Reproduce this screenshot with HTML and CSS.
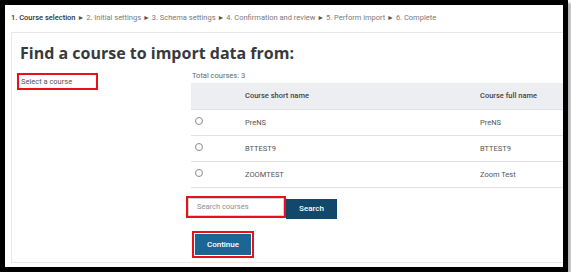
FILE: index.html
```html
<!DOCTYPE html>
<html lang="en">
<head>
    <meta charset="UTF-8">
    <title>Import course data</title>
    <link rel="stylesheet" href="styles.css">
</head>
<body>
    <div class="frame">
        <div class="steps">
            <span class="step-current">1. Course selection</span>
            <span class="sep">&#9658;</span> 2. Initial settings
            <span class="sep">&#9658;</span> 3. Schema settings
            <span class="sep">&#9658;</span> 4. Confirmation and review
            <span class="sep">&#9658;</span> 5. Perform import
            <span class="sep">&#9658;</span> 6. Complete
        </div>

        <div class="card">
            <h2>Find a course to import data from:</h2>

            <div class="layout">
                <div class="left">
                    <span class="label marked">Select a course</span>
                </div>
                <div class="right">
                    <div class="total">Total courses: 3</div>
                    <table class="courses">
                        <thead>
                            <tr>
                                <th class="col-pick"></th>
                                <th class="col-short">Course short name</th>
                                <th>Course full name</th>
                            </tr>
                        </thead>
                        <tbody>
                            <tr>
                                <td class="col-pick"><span class="radio"></span></td>
                                <td>PreNS</td>
                                <td>PreNS</td>
                            </tr>
                            <tr>
                                <td class="col-pick"><span class="radio"></span></td>
                                <td>BTTEST9</td>
                                <td>BTTEST9</td>
                            </tr>
                            <tr>
                                <td class="col-pick"><span class="radio"></span></td>
                                <td>ZOOMTEST</td>
                                <td>Zoom Test</td>
                            </tr>
                        </tbody>
                    </table>

                    <div class="search">
                        <div class="marked search-box">
                            <input type="text" placeholder="Search courses">
                        </div>
                        <button class="btn btn-dark">Search</button>
                    </div>

                    <div class="marked continue-box">
                        <button class="btn btn-primary">Continue</button>
                    </div>
                </div>
            </div>
        </div>
    </div>
</body>
</html>
```

FILE: styles.css
```css
body {
    margin: 0;
    background: #fff;
    font-family: Roboto, "Liberation Sans", sans-serif;
    color: #555;
}
.frame {
    width: 558px;
    height: 262px;
    border: 5px solid #000;
    box-shadow: 3px 3px 2px #b5b5b5;
    overflow: hidden;
    background: #fff;
}
.steps {
    margin: 8px 0 0 6px;
    font-size: 7.5px;
    line-height: 10px;
    color: #7a7a7a;
    white-space: nowrap;
}
.step-current {
    color: #333;
    font-weight: 500;
}
.sep {
    color: #555;
    font-size: 7px;
}
.card {
    margin: 9px 0 0 6px;
    width: 620px;
    height: 231px;
    border: 1px solid #e8e8e8;
    padding: 10px 0 0 8px;
    box-sizing: border-box;
}
h2 {
    margin: 0 0 5px;
    font-family: "Open Sans", sans-serif;
    font-weight: 700;
    font-size: 16px;
    line-height: 21px;
    color: #373a3c;
}
.layout {
    display: grid;
    grid-template-columns: 171px 1fr;
}
.marked {
    border: 2px solid #e8101a;
}
.label {
    display: inline-block;
    margin-left: -3px;
    width: 73px;
    padding: 0 2px;
    box-sizing: content-box;
    font-size: 7.5px;
    line-height: 13px;
    color: #555;
}
.total {
    padding: 1px 0 0 1px;
    font-size: 7.5px;
    line-height: 12px;
    color: #666;
}
.courses {
    margin-top: 1px;
    width: 440px;
    border-collapse: collapse;
    font-size: 7.5px;
    color: #555;
}
.courses th,
.courses td {
    height: 26px;
    padding: 0 0 0 10px;
    text-align: left;
    border-bottom: 1px solid #dee2e6;
    box-sizing: border-box;
}
.courses th {
    background: #eceef1;
    font-weight: 500;
    color: #444;
}
.courses .col-pick {
    width: 44px;
    padding-left: 4px;
}
.courses .col-short {
    width: 235px;
}
.radio {
    display: block;
    width: 6px;
    height: 6px;
    border: 1px solid #8a8a8a;
    border-radius: 50%;
    margin-top: -2px;
}
.search {
    display: flex;
    align-items: flex-start;
    margin: 8px 0 0 -5px;
}
.search-box {
    width: 96px;
    height: 18px;
}
.search-box input {
    display: block;
    margin: 0;
    width: 100%;
    height: 100%;
    box-sizing: border-box;
    border: 1px solid #ced4da;
    padding: 0 8px;
    font-family: Roboto, sans-serif;
    font-size: 7.5px;
    color: #555;
    outline: none;
}
.search-box input::placeholder {
    color: #8a8f94;
}
.btn {
    border: none;
    border-radius: 0;
    cursor: pointer;
    color: #fff;
    font-family: Roboto, sans-serif;
    font-size: 8px;
    font-weight: 500;
    padding: 0;
}
.btn-dark {
    margin-top: 3px;
    width: 51px;
    height: 20px;
    background: #12486b;
}
.continue-box {
    display: inline-block;
    margin: 12px 0 0 1px;
    padding: 1px;
}
.btn-primary {
    display: block;
    width: 56px;
    height: 21px;
    background: #1b6694;
}
```
